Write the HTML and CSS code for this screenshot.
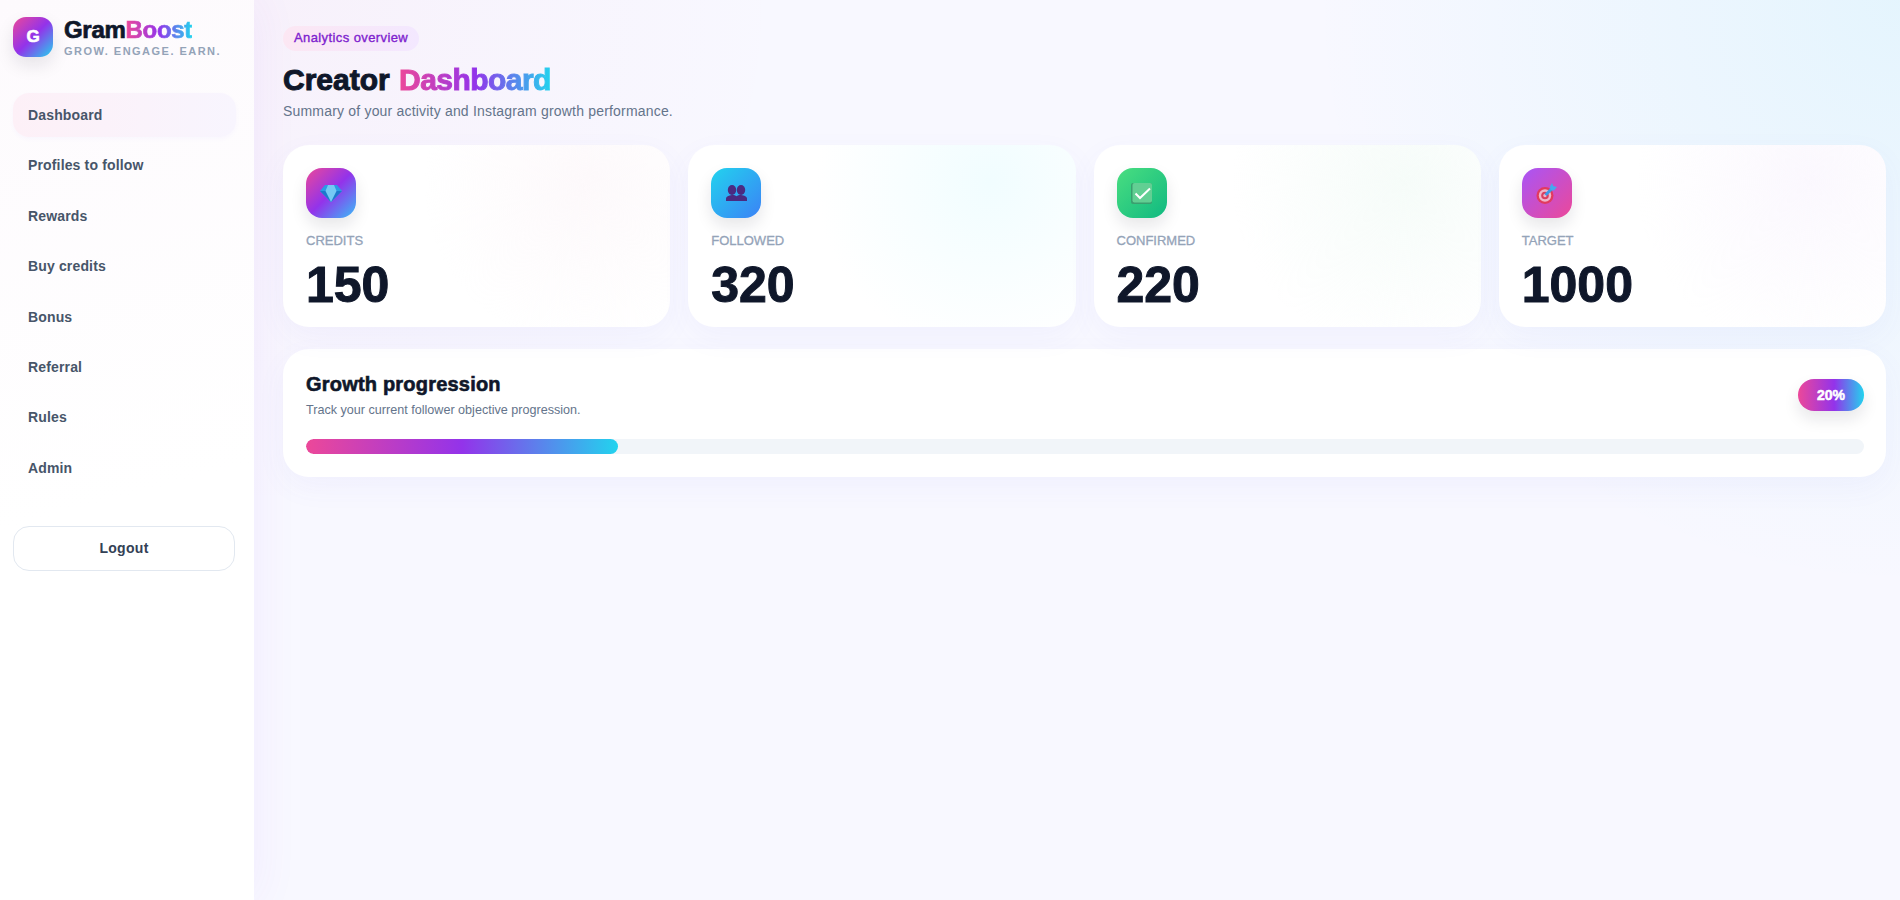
FILE: index.html
```html
<!DOCTYPE html>
<html>
<head>
    <title>GramBoost - Dashboard</title>
    <link rel="stylesheet" href="styles.css">
</head>
<body>
    <div class="app">
        <aside class="sidebar">
            <div class="brand">
                <div class="brand-logo">G</div>
                <div class="brand-text">
                    <div class="brand-name">Gram<span class="grad-text">Boost</span></div>
                    <div class="brand-tag">GROW. ENGAGE. EARN.</div>
                </div>
            </div>
            <nav class="nav">
                <a class="nav-item active">Dashboard</a>
                <a class="nav-item">Profiles to follow</a>
                <a class="nav-item">Rewards</a>
                <a class="nav-item">Buy credits</a>
                <a class="nav-item">Bonus</a>
                <a class="nav-item">Referral</a>
                <a class="nav-item">Rules</a>
                <a class="nav-item">Admin</a>
            </nav>
            <button class="logout">Logout</button>
        </aside>

        <main class="main">
            <span class="pill">Analytics overview</span>
            <h1 class="title">Creator <span class="grad-text">Dashboard</span></h1>
            <p class="subtitle">Summary of your activity and Instagram growth performance.</p>

            <section class="stats">
                <div class="card card-pink">
                    <div class="icon icon-credits">
                        <svg width="22" height="17" viewBox="0 0 22 17">
                            <path d="M5 0h12l5 6-11 11L0 6z" fill="#2a9be6"/>
                            <path d="M0 6h22L11 17z" fill="#1c78cc"/>
                            <path d="M8 0h6l2.500 6L11 17 5.500 6z" fill="#74c9f4"/>
                        </svg>
                    </div>
                    <div class="label">Credits</div>
                    <div class="value">150</div>
                </div>
                <div class="card card-cyan">
                    <div class="icon icon-followed">
                        <svg width="21" height="16" viewBox="0 0 21 16" fill="#4b2a82">
                            <ellipse cx="6" cy="5" rx="4.200" ry="5"/>
                            <ellipse cx="15" cy="5" rx="4.200" ry="5"/>
                            <path d="M0 16v-2.500C0 11.500 2.500 10.500 6 10c2 0 3.500.5 4.500 1.200C11.500 10.500 13 10 15 10c3.500.5 6 1.500 6 3.500V16z"/>
                        </svg>
                    </div>
                    <div class="label">Followed</div>
                    <div class="value">320</div>
                </div>
                <div class="card card-green">
                    <div class="icon icon-confirmed">
                        <svg width="21" height="21" viewBox="0 0 21 21">
                            <rect width="21" height="21" rx="2" fill="#3a9f6f"/>
                            <rect x="1.500" width="19.500" height="19.500" rx="2" fill="#62cf93"/>
                            <path d="M4.500 10.500l4.500 4.500L19 5.500" fill="none" stroke="#fff" stroke-width="2"/>
                        </svg>
                    </div>
                    <div class="label">Confirmed</div>
                    <div class="value">220</div>
                </div>
                <div class="card card-purple">
                    <div class="icon icon-target">
                        <svg width="21" height="21" viewBox="0 0 21 21">
                            <circle cx="9" cy="12.500" r="8.500" fill="#e23a5e"/>
                            <circle cx="9" cy="12.500" r="6.200" fill="#f0b4c8"/>
                            <circle cx="9" cy="12.500" r="3.800" fill="#d8405f"/>
                            <circle cx="9" cy="12.500" r="1.700" fill="#f0b4c8"/>
                            <path d="M9.500 12l7-7" stroke="#3b9ae8" stroke-width="3"/>
                            <path d="M14 3.500L16 0l1.200 3L21 4l-3 3.500-3.500-.5z" fill="#45a8f0"/>
                        </svg>
                    </div>
                    <div class="label">Target</div>
                    <div class="value">1000</div>
                </div>
            </section>

            <section class="progress-card">
                <div class="progress-head">
                    <div>
                        <h2 class="progress-title">Growth progression</h2>
                        <p class="progress-sub">Track your current follower objective progression.</p>
                    </div>
                    <span class="percent">20%</span>
                </div>
                <div class="bar">
                    <div class="bar-fill" style="width: 20%"></div>
                </div>
            </section>
        </main>
    </div>
</body>
</html>
```

FILE: styles.css
```css
* { box-sizing: border-box; }

html, body {
    margin: 0;
    height: 100%;
}
body {
    font-family: "Liberation Sans", Arial, sans-serif;
    color: #0f172a;
    background:
        radial-gradient(circle at 14% 0, rgba(236, 72, 153, 0.04), transparent 28%),
        radial-gradient(circle at 100% 0, rgba(34, 211, 238, 0.09), transparent 28%),
        #f8f8ff;
}
.app {
    display: flex;
    min-height: 900px;
}

.grad-text {
    background: linear-gradient(90deg, #ec4899, #9333ea 50%, #22d3ee);
    -webkit-background-clip: text;
    background-clip: text;
    color: transparent;
    -webkit-text-fill-color: transparent;
}

/* sidebar */
.sidebar {
    width: 254px;
    flex-shrink: 0;
    padding: 17px 18px 0 13px;
    background: linear-gradient(165deg, #fdfafd, #fff 55%);
    box-shadow: 0 0 45px rgba(147, 51, 234, 0.07);
}
.brand {
    display: flex;
    gap: 11px;
    height: 40px;
}
.brand-logo {
    width: 40px;
    height: 40px;
    flex-shrink: 0;
    border-radius: 13px;
    background: linear-gradient(135deg, #ec4899, #9333ea 50%, #22d3ee);
    box-shadow: 0 8px 18px rgba(15, 23, 42, 0.1);
    color: #fff;
    font-size: 17px;
    font-weight: 700;
    -webkit-text-stroke: 0.6px #fff;
    display: flex;
    align-items: center;
    justify-content: center;
}
.brand-text {
    padding-top: 1px;
}
.brand-name {
    font-size: 24px;
    font-weight: 700;
    line-height: 24px;
    letter-spacing: -0.3px;
    -webkit-text-stroke: 0.7px;
}
.brand-tag {
    margin-top: 3px;
    font-size: 11px;
    font-weight: 700;
    line-height: 13px;
    letter-spacing: 1.48px;
    color: #94a3b8;
    white-space: nowrap;
}

.nav {
    margin-top: 36px;
    display: flex;
    flex-direction: column;
    gap: 6.400px;
}
.nav-item {
    height: 44px;
    padding: 0 15px;
    display: flex;
    align-items: center;
    border-radius: 16px;
    color: #475569;
    font-size: 14px;
    font-weight: 700;
    letter-spacing: 0.15px;
}
.nav-item.active {
    background: linear-gradient(90deg, #fdf0f7, #f8f5fe);
    box-shadow: 0 2px 4px rgba(139, 92, 246, 0.04);
}
.logout {
    display: block;
    width: 222px;
    height: 45px;
    margin-top: 36px;
    background: #fff;
    border: 1.500px solid #e2e8f0;
    border-radius: 16px;
    color: #334155;
    font-family: inherit;
    font-size: 14px;
    font-weight: 700;
    letter-spacing: 0.3px;
}

/* main */
.main {
    flex: 1;
    min-width: 0;
    padding: 26px 14px 0 29px;
}
.pill {
    display: inline-block;
    height: 25px;
    padding: 0 11px;
    border-radius: 13px;
    background: linear-gradient(90deg, #fce7f3, #f3e8ff);
    color: #7e22ce;
    font-size: 13px;
    font-weight: 500;
    letter-spacing: 0.4px;
    -webkit-text-stroke: 0.35px;
    line-height: 24px;
}
.title {
    margin: 11px 0 0;
    font-size: 30px;
    line-height: 36px;
    font-weight: 700;
    word-spacing: 1px;
    -webkit-text-stroke: 1px;
}
.title .grad-text {
    letter-spacing: -0.55px;
}
.subtitle {
    margin: 4px 0 0;
    font-size: 14px;
    line-height: 18px;
    letter-spacing: 0.19px;
    color: #64748b;
}

.stats {
    margin-top: 25px;
    display: grid;
    grid-template-columns: repeat(4, 1fr);
    gap: 18px;
}
.card {
    height: 182px;
    padding: 23px;
    border-radius: 26px;
    box-shadow: 0 10px 30px rgba(99, 102, 241, 0.05);
}
.card-pink { background: radial-gradient(circle at 78% 22%, #fdf9fb, rgba(255, 255, 255, 0) 48%), #fff; }
.card-cyan { background: radial-gradient(circle at 78% 20%, #f1fdff, rgba(255, 255, 255, 0) 52%), #fff; }
.card-green { background: radial-gradient(circle at 80% 20%, #f6fcf9, rgba(255, 255, 255, 0) 50%), #fff; }
.card-purple { background: radial-gradient(circle at 80% 20%, #fbf8fe, rgba(255, 255, 255, 0) 50%), #fff; }

.icon {
    width: 50px;
    height: 50px;
    border-radius: 16px;
    display: flex;
    align-items: center;
    justify-content: center;
    box-shadow: 0 8px 16px rgba(15, 23, 42, 0.1);
}
.icon-credits { background: linear-gradient(135deg, #ec4899, #9333ea 50%, #38bdf8); }
.icon-followed { background: linear-gradient(135deg, #22d3ee, #3b82f6); }
.icon-confirmed { background: linear-gradient(135deg, #4ade80, #10b981); }
.icon-target { background: linear-gradient(135deg, #a855f7, #ec4899); }

.label {
    margin-top: 15px;
    font-size: 13px;
    line-height: 16px;
    font-weight: 500;
    -webkit-text-stroke: 0.3px;
    color: #94a3b8;
    text-transform: uppercase;
}
.value {
    margin-top: 8px;
    font-size: 50px;
    line-height: 56px;
    font-weight: 700;
    -webkit-text-stroke: 1px;
}

.progress-card {
    margin-top: 22px;
    height: 128px;
    padding: 22px 22px 0 23px;
    border-radius: 26px;
    background: #fff;
    box-shadow: 0 10px 30px rgba(99, 102, 241, 0.05);
}
.progress-head {
    display: flex;
    justify-content: space-between;
    align-items: flex-start;
}
.progress-title {
    margin: 0;
    font-size: 20px;
    line-height: 26px;
    font-weight: 700;
    letter-spacing: 0.2px;
    -webkit-text-stroke: 0.6px;
}
.progress-sub {
    margin: 6px 0 0;
    font-size: 12.600px;
    line-height: 15px;
    color: #64748b;
}
.percent {
    margin-top: 8px;
    width: 66px;
    height: 32px;
    border-radius: 16px;
    background: linear-gradient(90deg, #ec4899, #9333ea 55%, #22d3ee);
    box-shadow: 0 8px 16px rgba(15, 23, 42, 0.1);
    color: #fff;
    font-size: 14px;
    font-weight: 700;
    -webkit-text-stroke: 0.5px #fff;
    line-height: 32px;
    text-align: center;
}
.bar {
    margin-top: 21px;
    height: 15px;
    border-radius: 8px;
    background: #f1f5f9;
    overflow: hidden;
}
.bar-fill {
    height: 100%;
    border-radius: 8px;
    background: linear-gradient(90deg, #ec4899, #9333ea 50%, #22d3ee);
}
```
